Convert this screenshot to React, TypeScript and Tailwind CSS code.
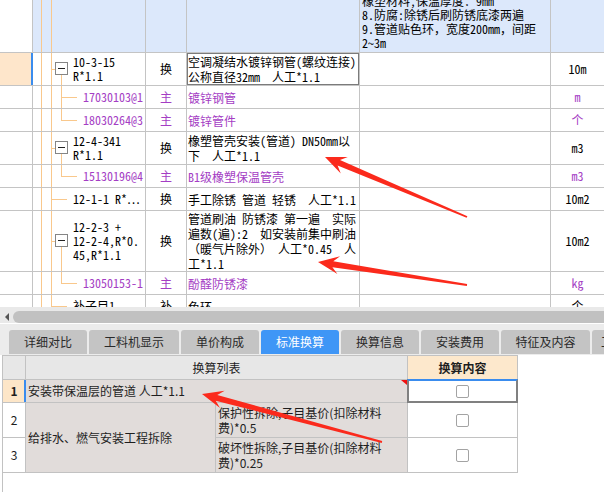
import type { ReactNode } from "react";

type Tree = "none" | "parent" | "child" | "childLast" | "leaf";

interface GridRow {
  h: string;
  tree: Tree;
  code: string[];
  type: string;
  desc: string[];
  unit: string;
  purple?: boolean;
  selected?: boolean;
  head?: boolean;
}

const rows: GridRow[] = [
  {
    h: "h-[53px]",
    tree: "none",
    code: [],
    type: "",
    desc: ["橡塑材料,保温厚度：9mm", "8.防腐:除锈后刷防锈底漆两遍", "9.管道贴色环，宽度200mm，间距", "2~3m"],
    unit: "",
    head: true,
  },
  {
    h: "h-[33px]",
    tree: "parent",
    code: ["10-3-15", "R*1.1"],
    type: "换",
    desc: ["空调凝结水镀锌钢管(螺纹连接)", "公称直径32mm  人工*1.1"],
    unit: "10m",
    selected: true,
  },
  { h: "h-[23px]", tree: "child", code: ["17030103@1"], type: "主", desc: ["镀锌钢管"], unit: "m", purple: true },
  { h: "h-[23px]", tree: "childLast", code: ["18030264@3"], type: "主", desc: ["镀锌管件"], unit: "个", purple: true },
  {
    h: "h-[33px]",
    tree: "parent",
    code: ["12-4-341", "R*1.1"],
    type: "换",
    desc: ["橡塑管壳安装(管道) DN50mm以", "下  人工*1.1"],
    unit: "m3",
  },
  { h: "h-[23px]", tree: "childLast", code: ["15130196@4"], type: "主", desc: ["B1级橡塑保温管壳"], unit: "m3", purple: true },
  { h: "h-[23px]", tree: "leaf", code: ["12-1-1 R*…"], type: "换", desc: ["手工除锈 管道 轻锈  人工*1.1"], unit: "10m2" },
  {
    h: "h-[61px]",
    tree: "parent",
    code: ["12-2-3 +", "12-2-4,R*0.", "45,R*1.1"],
    type: "换",
    desc: ["管道刷油 防锈漆 第一遍  实际", "遍数(遍):2  如安装前集中刷油", "（暖气片除外） 人工*0.45  人", "工*1.1"],
    unit: "10m2",
  },
  { h: "h-[23px]", tree: "childLast", code: ["13050153-1"], type: "主", desc: ["酚醛防锈漆"], unit: "kg", purple: true },
  { h: "h-[23px]", tree: "leaf", code: ["补子目1"], type: "补", desc: ["色环"], unit: "个" },
];

const tabs = ["详细对比", "工料机显示", "单价构成", "标准换算", "换算信息", "安装费用", "特征及内容", "工程量明细"];
const tabWidths = ["w-[78px]", "w-[90px]", "w-[78px]", "w-[78px]", "w-[78px]", "w-[78px]", "w-[89px]", "w-[78px]"];

function TreeLines({ kind }: { kind: Tree }) {
  return (
    <>
      <span className="absolute left-[8px] top-0 bottom-0 w-px bg-[#f9c88c]" />
      <span className="absolute left-[18px] top-0 bottom-0 w-px bg-[#f9c88c]" />
      {kind === "parent" && (
        <>
          <span className="absolute left-[18px] top-1/2 h-px w-[5px] bg-[#f9c88c]" />
          <span className="absolute left-[28px] top-1/2 bottom-0 w-px bg-[#f9c88c]" />
          <span className="absolute left-[22px] top-1/2 -mt-[7px] flex size-[13px] items-center justify-center border border-[#858585] bg-white">
            <span className="h-px w-[7px] bg-[#222]" />
          </span>
        </>
      )}
      {kind === "child" && <span className="absolute left-[28px] top-0 bottom-0 w-px bg-[#f9c88c]" />}
      {kind === "childLast" && <span className="absolute left-[28px] top-0 h-1/2 w-px bg-[#f9c88c]" />}
      {(kind === "child" || kind === "childLast") && (
        <span className="absolute left-[28px] top-1/2 h-px w-[16px] bg-[#f9c88c]" />
      )}
      {kind === "leaf" && <span className="absolute left-[18px] top-1/2 h-px w-[16px] bg-[#f9c88c]" />}
    </>
  );
}

function Lines({ lines }: { lines: string[] }) {
  return (
    <div className="flex flex-col">
      {lines.map((l, i) => (
        <div key={i} className="whitespace-pre">
          {l}
        </div>
      ))}
    </div>
  );
}

function TopRow({ row }: { row: GridRow }) {
  const tint = row.head ? "bg-[#dce8fb]" : "bg-white";
  const color = row.purple ? "text-[#a43dc4]" : "text-black";
  return (
    <div className={`grid grid-cols-[33px_113px_41px_173px_191px_53px] ${row.h} ${color}`}>
      <div className={`relative border-r border-b border-[#c4c4c4] ${row.selected ? "bg-[#fee6cb]" : "bg-white"}`}>
        {row.selected && <span className="absolute top-0 bottom-0 -right-px w-[2px] bg-[#3a8cee]" />}
      </div>
      <div className={`relative flex items-center overflow-hidden border-r border-b border-[#c4c4c4] ${tint}`}>
        <TreeLines kind={row.tree} />
        <div className={`leading-[14px] ${row.tree === "child" || row.tree === "childLast" ? "pl-[50px]" : "pl-[40px]"}`}>
          <Lines lines={row.code} />
        </div>
      </div>
      <div className={`flex items-center justify-center border-r border-b border-[#c4c4c4] ${tint}`}>{row.type}</div>
      <div className={`relative flex items-center overflow-hidden border-r border-b border-[#c4c4c4] pl-[1px] leading-[15px] ${tint}`}>
        {!row.head && <Lines lines={row.desc} />}
        {row.selected && <span className="absolute -inset-px border-2 border-[#7b7b7b]" />}
      </div>
      <div
        className={`flex overflow-hidden border-r border-b border-[#c4c4c4] pl-[2px] ${
          row.head ? "items-end pb-[2px] leading-[14px]" : "items-center"
        } ${tint}`}
      >
        {row.head && <Lines lines={row.desc} />}
      </div>
      <div className={`flex items-center justify-center border-b border-[#c4c4c4] ${tint}`}>{row.unit}</div>
    </div>
  );
}

function Checkbox() {
  return <span className="block size-[13px] rounded-[2px] border border-[#a3a3a3] bg-white" />;
}

function arrowPoints(tx: number, ty: number, hx: number, hy: number) {
  const dx = hx - tx;
  const dy = hy - ty;
  const len = Math.hypot(dx, dy);
  const ux = dx / len;
  const uy = dy / len;
  const nx = -uy;
  const ny = ux;
  const pt = (d: number, w: number) => `${(hx - ux * d + nx * w).toFixed(1)},${(hy - uy * d + ny * w).toFixed(1)}`;
  return [
    pt(len, 0.9),
    pt(15, 3),
    pt(21, 9),
    `${hx},${hy}`,
    pt(21, -9),
    pt(15, -3),
    pt(len, -0.9),
  ].join(" ");
}

function Arrows() {
  return (
    <svg className="pointer-events-none absolute inset-0" width={604} height={492} viewBox="0 0 604 492">
      <polygon points={arrowPoints(467, 217, 325, 157)} fill="#fb2a1c" />
      <polygon points={arrowPoints(467, 285, 318, 262)} fill="#fb2a1c" />
      <polygon points={arrowPoints(382, 442, 202, 394)} fill="#fb2a1c" />
    </svg>
  );
}

function Cell({ className, children }: { className: string; children?: ReactNode }) {
  return <div className={`border-r border-b border-[#c2c2c2] ${className}`}>{children}</div>;
}

export default function App() {
  return (
    <div className="relative flex h-[492px] w-[604px] flex-col overflow-hidden bg-white text-[12px]">
      {/* grid */}
      <div className="h-[307px] overflow-hidden font-['Noto_Sans_Mono_CJK_SC','Noto_Sans_CJK_SC',monospace]">
        {rows.map((r, i) => (
          <TopRow key={i} row={r} />
        ))}
      </div>

      {/* horizontal scrollbar */}
      <div className="flex h-[16px] items-end bg-[#e9e9e9]">
        <div className="flex h-[12px] w-[13px] items-center justify-center">
          <span className="h-0 w-0 border-y-[4px] border-r-[4px] border-y-transparent border-r-[#555]" />
        </div>
        <div className="h-[12px] flex-1 rounded-l-[6px] bg-[#c1c1c1]" />
      </div>
      <div className="h-px bg-white" />

      {/* tabs */}
      <div className="flex h-[31px] gap-[2px] bg-[#ececec] pl-[9px] pt-[6px] font-['Noto_Sans_CJK_SC',sans-serif]">
        {tabs.map((t, i) => (
          <div
            key={t}
            className={`flex h-[24px] shrink-0 items-center justify-center rounded-t-[3px] ${tabWidths[i]} ${
              i === 3 ? "bg-[#3f96f6] text-white" : "bg-[#c4c4c4] text-[#2a2a2a]"
            }`}
          >
            {t}
          </div>
        ))}
      </div>

      {/* conversion table */}
      <div className="ml-[2px] flex-1 border-l border-[#c2c2c2] font-['Noto_Sans_CJK_SC',sans-serif] text-[#1e1e1e]">
        <div className="grid w-[515px] grid-cols-[23px_190px_192px_110px] grid-rows-[24px_23px_35px_35px] border-t border-[#c2c2c2]">
          <Cell className="bg-[#e7e7e7]" />
          <Cell className="col-span-2 flex items-center justify-center bg-[#e7e7e7]">换算列表</Cell>
          <Cell className="flex items-center justify-center bg-[#fde8cc] font-bold">换算内容</Cell>

          <Cell className="relative flex items-center justify-center bg-[#fde6c8] font-bold">
            1
            <span className="absolute top-0 bottom-0 -right-px w-[2px] bg-[#3a8cee]" />
          </Cell>
          <Cell className="relative col-span-2 flex items-center whitespace-pre bg-[#e1dcda] pl-[2px]">
            安装带保温层的管道 人工*1.1
            <svg className="absolute top-0 right-0" width={6} height={5} viewBox="0 0 6 5">
              <polygon points="0,0 6,0 6,5" fill="#f01010" />
            </svg>
          </Cell>
          <Cell className="relative flex items-center justify-center bg-white">
            <Checkbox />
            <span className="absolute -inset-px border-2 border-t-[#3a8cee] border-[#808080]" />
          </Cell>

          <Cell className="flex items-center justify-center bg-white">2</Cell>
          <Cell className="row-span-2 flex items-center bg-[#e1dcda] pl-[2px]">给排水、燃气安装工程拆除</Cell>
          <Cell className="flex flex-col justify-center bg-[#e1dcda] pl-[2px] leading-[15px]">
            <div>保护性拆除,子目基价(扣除材料</div>
            <div>费)*0.5</div>
          </Cell>
          <Cell className="flex items-center justify-center bg-white">
            <Checkbox />
          </Cell>

          <Cell className="flex items-center justify-center bg-white">3</Cell>
          <Cell className="flex flex-col justify-center bg-[#e1dcda] pl-[2px] leading-[15px]">
            <div>破坏性拆除,子目基价(扣除材料</div>
            <div>费)*0.25</div>
          </Cell>
          <Cell className="flex items-center justify-center bg-white">
            <Checkbox />
          </Cell>
        </div>
      </div>

      <Arrows />
    </div>
  );
}
